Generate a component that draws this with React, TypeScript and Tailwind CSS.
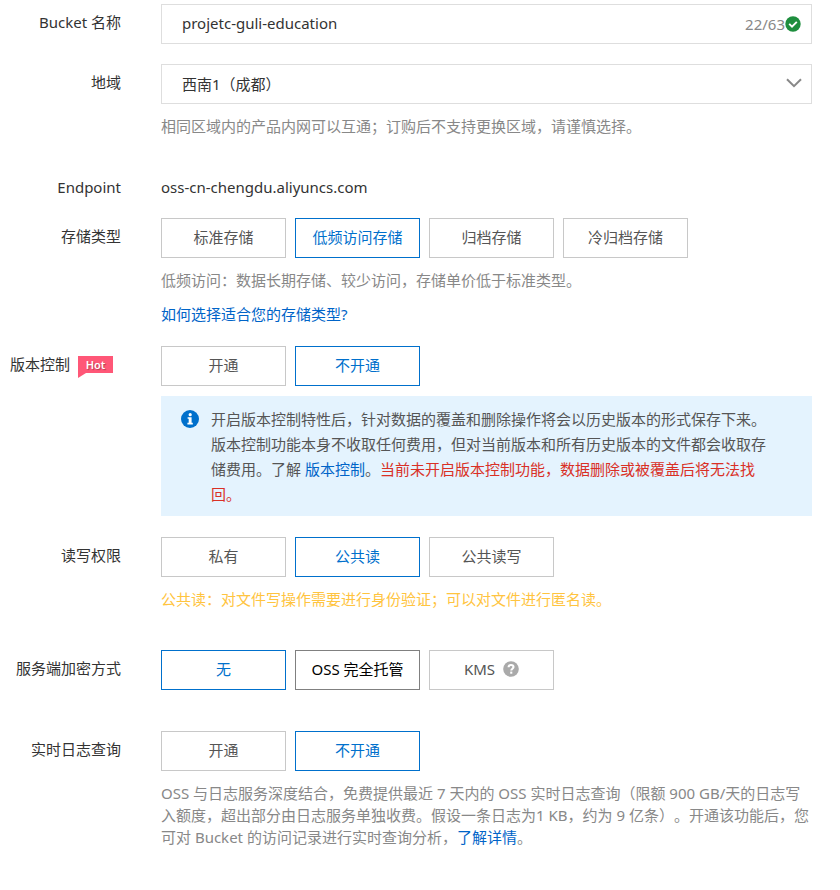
import { useState, type ReactNode } from 'react';
import clsx from 'clsx';

type Option = {
  value: string;
  label: ReactNode;
  highlighted?: boolean;
};

const storageOptions: Option[] = [
  { value: 'standard', label: '标准存储' },
  { value: 'ia', label: '低频访问存储' },
  { value: 'archive', label: '归档存储' },
  { value: 'cold-archive', label: '冷归档存储' },
];

const switchOptions: Option[] = [
  { value: 'on', label: '开通' },
  { value: 'off', label: '不开通' },
];

const aclOptions: Option[] = [
  { value: 'private', label: '私有' },
  { value: 'public-read', label: '公共读' },
  { value: 'public-read-write', label: '公共读写' },
];

const encryptionOptions: Option[] = [
  { value: 'none', label: '无' },
  { value: 'oss', label: 'OSS 完全托管', highlighted: true },
  { value: 'kms', label: <>KMS <HelpIcon /></> },
];

export default function App() {
  const [bucket, setBucket] = useState('projetc-guli-education');
  const [region, setRegion] = useState('chengdu');
  const [storage, setStorage] = useState('ia');
  const [versioning, setVersioning] = useState('off');
  const [acl, setAcl] = useState('public-read');
  const [encryption, setEncryption] = useState('none');
  const [logging, setLogging] = useState('off');

  return (
    <form
      lang="zh-CN"
      className="bg-white pt-1 pr-7 pb-10 font-['Noto_Sans','Noto_Sans_CJK_SC',sans-serif] text-[15px] text-[#333] [text-spacing-trim:space-all]"
    >
      <Row label={<label htmlFor="bucket">Bucket 名称</label>}>
        <div className="flex h-10 items-center border border-[#dedede] pr-2.5 pl-5">
          <input
            id="bucket"
            type="text"
            maxLength={63}
            value={bucket}
            onChange={(e) => setBucket(e.target.value)}
            className="h-full min-w-0 flex-1 pb-0.5 outline-none"
          />
          <span className="text-[#888]">{bucket.length}/63</span>
          <CheckIcon />
        </div>
      </Row>

      <Row className="mt-5" label={<label htmlFor="region">地域</label>}>
        <div className="relative">
          <select
            id="region"
            value={region}
            onChange={(e) => setRegion(e.target.value)}
            className="h-10 w-full appearance-none border border-[#dedede] bg-white px-5 outline-none"
          >
            <option value="chengdu">西南1（成都）</option>
          </select>
          <svg
            viewBox="0 0 16 10"
            className="pointer-events-none absolute top-3.5 right-2.5 h-2.5 w-4"
            fill="none"
            stroke="#888"
            strokeWidth="2"
          >
            <path d="M1 1.2 8 8.2 15 1.2" />
          </svg>
        </div>
        <Hint>相同区域内的产品内网可以互通；订购后不支持更换区域，请谨慎选择。</Hint>
      </Row>

      <Row className="mt-8" label="Endpoint">
        <p className="leading-9">oss-cn-chengdu.aliyuncs.com</p>
      </Row>

      <Row className="mt-[13px]" label="存储类型">
        <OptionGroup name="存储类型" options={storageOptions} value={storage} onChange={setStorage} />
        <Hint>低频访问：数据长期存储、较少访问，存储单价低于标准类型。</Hint>
        <p className="mt-3 leading-[22px]">
          <a href="#storage" className="text-[#0064c8]">如何选择适合您的存储类型?</a>
        </p>
      </Row>

      <Row
        className="mt-[21px]"
        label={
          <span className="flex items-center justify-end gap-2 pr-2">
            版本控制
            <HotBadge />
          </span>
        }
      >
        <OptionGroup name="版本控制" options={switchOptions} value={versioning} onChange={setVersioning} />
        <div className="mt-2.5 flex gap-3 bg-[#e4f3fe] pt-[11px] pr-10 pb-[9px] pl-5 leading-[25px] text-[#555]">
          <InfoIcon />
          <p className="min-w-0 flex-1">
            开启版本控制特性后，针对数据的覆盖和删除操作将会以历史版本的形式保存下来。版本控制功能本身不收取任何费用，但对当前版本和所有历史版本的文件都会收取存储费用。了解{' '}
            <a href="#versioning" className="text-[#0064c8]">版本控制</a>。
            <span className="text-[#d93026]">当前未开启版本控制功能，数据删除或被覆盖后将无法找回。</span>
          </p>
        </div>
      </Row>

      <Row className="mt-[21px]" label="读写权限">
        <OptionGroup name="读写权限" options={aclOptions} value={acl} onChange={setAcl} />
        <Hint className="text-[#ffc440]">公共读：对文件写操作需要进行身份验证；可以对文件进行匿名读。</Hint>
      </Row>

      <Row className="mt-10" label="服务端加密方式">
        <OptionGroup name="服务端加密方式" options={encryptionOptions} value={encryption} onChange={setEncryption} />
      </Row>

      <Row className="mt-[41px]" label="实时日志查询">
        <OptionGroup name="实时日志查询" options={switchOptions} value={logging} onChange={setLogging} />
        <Hint>
          OSS 与日志服务深度结合，免费提供最近 7 天内的 OSS 实时日志查询（限额 900 GB/天的日志写入额度，超出部分由日志服务单独收费。假设一条日志为1 KB，约为 9 亿条）。开通该功能后，您可对 Bucket 的访问记录进行实时查询分析，
          <a href="#logging" className="text-[#0064c8]">了解详情</a>。
        </Hint>
      </Row>
    </form>
  );
}

function Row({ label, className, children }: { label: ReactNode; className?: string; children: ReactNode }) {
  return (
    <div className={clsx('flex gap-10', className)}>
      <div className="w-[121px] shrink-0 text-right leading-9">{label}</div>
      <div className="min-w-0 flex-1">{children}</div>
    </div>
  );
}

function Hint({ className = 'text-[#888]', children }: { className?: string; children: ReactNode }) {
  return <p className={clsx('mt-[11px] leading-[22px]', className)}>{children}</p>;
}

function OptionGroup({
  name,
  options,
  value,
  onChange,
}: {
  name: string;
  options: Option[];
  value: string;
  onChange: (value: string) => void;
}) {
  return (
    <div role="group" aria-label={name} className="flex flex-wrap gap-[9px]">
      {options.map((option) => (
        <button
          key={option.value}
          type="button"
          aria-pressed={option.value === value}
          onClick={() => onChange(option.value)}
          className={clsx(
            'flex h-10 w-[125px] items-center justify-center gap-2 border bg-white pb-0.5',
            option.value === value
              ? 'border-[#0070cc] text-[#0070cc]'
              : option.highlighted
                ? 'border-[#808080] text-black'
                : 'border-[#c8c8c8] text-[#555]',
          )}
        >
          {option.label}
        </button>
      ))}
    </div>
  );
}

function HotBadge() {
  return (
    <span className="relative h-[17px] w-[35px] bg-[#ff5777] text-center text-[11px] leading-[17px] font-semibold text-white [text-shadow:1px_1px_1px_rgba(0,0,0,0.3)]">
      Hot
      <svg viewBox="0 0 8 5" className="absolute top-full left-0 h-[5px] w-2" fill="#ff5777">
        <path d="M0 0h8L0 5z" />
      </svg>
    </span>
  );
}

function CheckIcon() {
  return (
    <svg viewBox="0 0 16 16" className="size-4 shrink-0">
      <circle cx="8" cy="8" r="7.7" fill="#1e8e3e" />
      <path d="M4.2 7.9 7 10.6 11.8 5.8" fill="none" stroke="#fff" strokeWidth="1.9" />
    </svg>
  );
}

function InfoIcon() {
  return (
    <svg viewBox="0 0 18 18" className="mt-[3px] size-[18px] shrink-0">
      <circle cx="9" cy="9" r="9" fill="#0070cc" />
      <circle cx="9.2" cy="4.7" r="1.6" fill="#fff" />
      <path d="M6.6 7.2h4v5.6h1.2v1.6H6.4v-1.6h1.3V8.8H6.6z" fill="#fff" />
    </svg>
  );
}

function HelpIcon() {
  return (
    <svg viewBox="0 0 16 16" className="size-4 shrink-0">
      <circle cx="8" cy="8" r="7.8" fill="#aaa" />
      <path
        d="M5.6 6.3C5.6 4.8 6.6 4 8 4s2.5.8 2.5 2.1c0 1.6-2.2 1.7-2.2 3.4"
        fill="none"
        stroke="#fff"
        strokeWidth="2.1"
      />
      <rect x="7.2" y="10.6" width="2.1" height="2.1" fill="#fff" />
    </svg>
  );
}
